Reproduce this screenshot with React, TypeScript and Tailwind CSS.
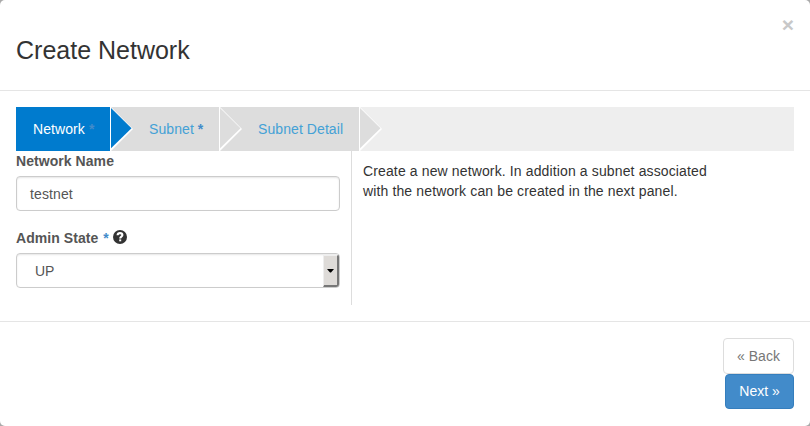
import React from "react";

function Arrow({ fill, under }: { fill: string; under: string }) {
  return (
    <svg width="24" height="44" viewBox="0 0 24 44" className="block shrink-0">
      <rect width="24" height="44" fill={under} />
      <path d="M0 0H1L23 22L1 44H0Z" fill="#fff" />
      <path d="M1 1L21.5 21.2L1 41.2Z" fill={fill} />
    </svg>
  );
}

function Field({ label, children }: { label: React.ReactNode; children: React.ReactNode }) {
  return (
    <div className="flex flex-col">
      <div className="mb-[5px] flex h-5 items-center font-bold tracking-[0.06px] text-[#555]">{label}</div>
      {children}
    </div>
  );
}

const control =
  "flex h-[35px] w-[324px] items-center rounded-[4px] border border-[#ccc] bg-white text-[#555] shadow-[inset_0_1px_2px_rgba(0,0,0,0.1)]";

export default function App() {
  return (
    <div className="h-[426px] w-[810px] overflow-hidden bg-[#aaa]">
      <div className="flex h-full flex-col rounded-[5px] bg-white font-['Liberation_Sans',Arial,sans-serif] text-[14px] leading-5 text-[#333]">
        <header className="flex h-[91px] shrink-0 justify-between border-b border-[#e5e5e5] px-4">
          <h4 className="pt-[33px] text-[25px] leading-[34px]">Create Network</h4>
          <button className="mt-[14px] h-[21px] text-[21px] leading-[21px] font-bold text-[#c8c8c8]">×</button>
        </header>

        <main className="h-[230px] shrink-0 px-4 pt-4">
          <nav className="flex h-11 bg-[#eee] leading-[44px] tracking-[0.08px] text-[#44a1d6]">
            <div className="w-[94px] bg-[#007bce] pl-[17px] text-white">
              Network <span className="font-bold text-[#428bca]">*</span>
            </div>
            <Arrow fill="#007bce" under="#ddd" />
            <div className="w-[85px] bg-[#ddd] pl-[15px]">
              Subnet <span className="font-bold text-[#428bca]">*</span>
            </div>
            <Arrow fill="#ddd" under="#ddd" />
            <div className="w-[116px] bg-[#ddd] pl-[15px]">Subnet Detail</div>
            <Arrow fill="#ddd" under="#eee" />
          </nav>

          <div className="flex">
            <section className="flex h-[154px] w-[336px] flex-col gap-[17px] border-r border-[#ddd]">
              <Field label="Network Name">
                <div className={`${control} px-[13px] tracking-[0.12px]`}>testnet</div>
              </Field>
              <Field
                label={
                  <>
                    Admin State
                    <span className="ml-[5px] text-[#428bca]">*</span>
                    <svg width="14" height="14" viewBox="0 0 14 14" className="mb-[2px] ml-1">
                      <circle cx="7" cy="7" r="7" fill="#333" />
                      <path d="M4.6 5.3C4.7 3.7 5.6 3.1 7 3.1C8.4 3.1 9.4 3.9 9.4 5.1C9.4 6.8 7.2 6.6 7.2 8.6" fill="none" stroke="#fff" strokeWidth="2.1" />
                      <path d="M6.2 9.4H8.2V11.3H6.2Z" fill="#fff" />
                    </svg>
                  </>
                }
              >
                <div className={`${control} justify-between pl-[18px]`}>
                  <span>UP</span>
                  <span className="flex h-[33px] w-4 items-center justify-center rounded-r-[3px] border-t-2 border-r-2 border-b-2 border-l border-t-[#eee] border-r-[#777] border-b-[#777] border-l-[#eee] bg-[#dedbd8]">
                    <svg width="7" height="4" viewBox="0 0 7 4" className="mt-px">
                      <path d="M0 0H7L4 3.5H3Z" fill="#000" />
                    </svg>
                  </span>
                </div>
              </Field>
            </section>
            <p className="w-[370px] pt-[10px] pl-[11px] tracking-[0.13px]">
              Create a new network. In addition a subnet associated with the network can be created in the next panel.
            </p>
          </div>
        </main>

        <footer className="flex flex-1 flex-col items-end border-t border-[#e5e5e5] px-4 pt-4">
          <button className="h-9 w-[71px] rounded-[4px] border border-[#ddd] bg-white text-[#777]">« Back</button>
          <button className="h-[35px] w-[69px] rounded-[4px] border border-[#357ebd] bg-[#428bca] pb-px text-white">Next »</button>
        </footer>
      </div>
    </div>
  );
}
